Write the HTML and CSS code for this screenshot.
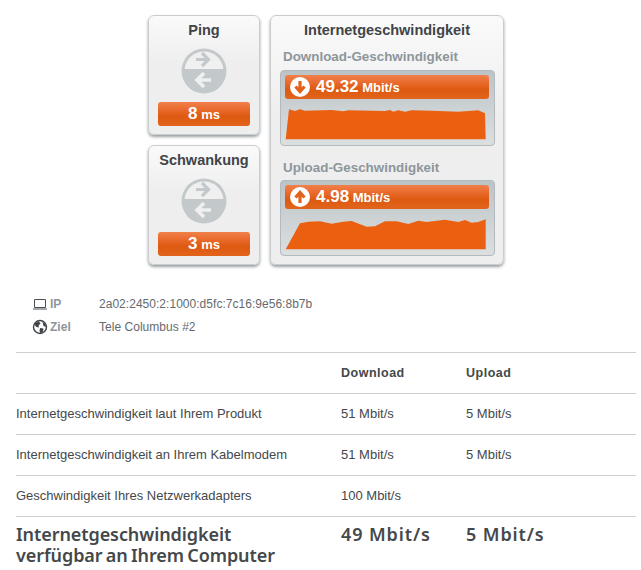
FILE: index.html
```html
<!DOCTYPE html>
<html>

	<head>
		<meta charset="UTF-8">
		<title>Speedtest</title>
		<link rel="stylesheet" href="styles.css">
	</head>

	<body>
		<div class="panels">
			<div class="side">
				<div class="box small">
					<h2>Ping</h2>
					<svg class="ping-icon" width="46" height="46" viewBox="0 0 46 46">
						<circle cx="23" cy="23" r="22.5" fill="#c3c8ca" />
						<path d="M3.6 21 A19.5 19.5 0 0 1 42.4 21 Z" fill="#f0f0f0" />
						<path d="M15 11.5 H28 M21 5 L27.5 11.5 L21 18" fill="none" stroke="#c3c8ca" stroke-width="3.2" />
						<path d="M30 32 H16 M23 25 L16 32 L23 39" fill="none" stroke="#f0f0f0" stroke-width="3.6" />
					</svg>
					<div class="bar value"><b>8</b> ms</div>
				</div>
				<div class="box small">
					<h2>Schwankung</h2>
					<svg class="ping-icon" width="46" height="46" viewBox="0 0 46 46">
						<circle cx="23" cy="23" r="22.5" fill="#c3c8ca" />
						<path d="M3.6 21 A19.5 19.5 0 0 1 42.4 21 Z" fill="#f0f0f0" />
						<path d="M15 11.5 H28 M21 5 L27.5 11.5 L21 18" fill="none" stroke="#c3c8ca" stroke-width="3.2" />
						<path d="M30 32 H16 M23 25 L16 32 L23 39" fill="none" stroke="#f0f0f0" stroke-width="3.6" />
					</svg>
					<div class="bar value"><b>3</b> ms</div>
				</div>
			</div>
			<div class="box big">
				<h2>Internetgeschwindigkeit</h2>
				<h3>Download-Geschwindigkeit</h3>
				<div class="graph">
					<div class="bar speed">
						<svg width="20" height="20" viewBox="0 0 20 20">
							<circle cx="10" cy="10" r="10" fill="#fff" />
							<path d="M10 4 V14 M5.5 9.5 L10 14.5 L14.5 9.5" fill="none" stroke="#e2621b" stroke-width="3.2" />
						</svg>
						<span><b>49.32</b> Mbit/s</span>
					</div>
					<svg class="chart" width="204" height="41" viewBox="0 0 204 41">
						<polygon fill="#eb5f10" points="0.7,40.3 4,10.3 10,12 15,10.3 20,11.7 46.7,11 58.3,12.3 63.3,11.3 100,12 105,11 108.3,12.7 113.3,11.3 120,12.7 126.7,11.3 146.7,11.7 173.3,12.7 193.3,11.3 200,14.3 200.7,40.3" />
					</svg>
				</div>
				<h3>Upload-Geschwindigkeit</h3>
				<div class="graph">
					<div class="bar speed">
						<svg width="20" height="20" viewBox="0 0 20 20">
							<circle cx="10" cy="10" r="10" fill="#fff" />
							<path d="M10 16 V6 M5.5 10.5 L10 5.5 L14.5 10.5" fill="none" stroke="#e2621b" stroke-width="3.2" />
						</svg>
						<span><b>4.98</b> Mbit/s</span>
					</div>
					<svg class="chart" width="204" height="41" viewBox="0 0 204 41">
						<polygon fill="#eb5f10" points="0.7,40.3 15,14.3 23.3,12.7 35,12.3 46.7,14.7 58.3,12.7 66.7,12 81.7,17.7 90,17.3 100,12.3 111.7,12.3 123.3,15 133.3,11.7 141.7,13 160,10.7 173.3,13 180,11 186.7,13.7 193.3,13 200.7,10.3 200.7,40.3" />
					</svg>
				</div>
			</div>
		</div>

		<div class="info">
			<div class="info-row">
				<span class="info-label">
					<svg width="16" height="14" viewBox="0 0 16 14">
						<path d="M2.5 2.5 H13.5 V10.5 H2.5 Z" fill="none" stroke="#4a4f53" stroke-width="1" />
						<path d="M1 11.5 H15 V12.5 H1 Z" fill="#4a4f53" />
					</svg>
					IP
				</span>
				<span>2a02:2450:2:1000:d5fc:7c16:9e56:8b7b</span>
			</div>
			<div class="info-row">
				<span class="info-label">
					<svg width="16" height="16" viewBox="0 0 16 16">
						<circle cx="8" cy="8" r="6.5" fill="#fff" stroke="#3f4448" stroke-width="1.4" />
						<path d="M3 4 L7 2.5 L8.5 4.5 L6.5 6.5 L7 8.5 L4.5 8 L2.5 6 Z M8 9 L11.5 9.5 L11 12.5 L8.5 14.5 L7.5 12 Z M10.5 3 L13.5 5 L14 8 L11.5 7 Z" fill="#3f4448" />
					</svg>
					Ziel
				</span>
				<span>Tele Columbus #2</span>
			</div>
		</div>

		<table class="results">
			<tr class="head">
				<td></td>
				<td>Download</td>
				<td>Upload</td>
			</tr>
			<tr>
				<td>Internetgeschwindigkeit laut Ihrem Produkt</td>
				<td>51 Mbit/s</td>
				<td>5 Mbit/s</td>
			</tr>
			<tr>
				<td>Internetgeschwindigkeit an Ihrem Kabelmodem</td>
				<td>51 Mbit/s</td>
				<td>5 Mbit/s</td>
			</tr>
			<tr>
				<td>Geschwindigkeit Ihres Netzwerkadapters</td>
				<td>100 Mbit/s</td>
				<td></td>
			</tr>
			<tr class="total">
				<td>Internetgeschwindigkeit<br>verfügbar an Ihrem Computer</td>
				<td class="num">49 Mbit/s</td>
				<td class="num">5 Mbit/s</td>
			</tr>
		</table>
	</body>

</html>
```

FILE: styles.css
```css
* {
	margin: 0;
	padding: 0;
	box-sizing: border-box;
}

body {
	width: 641px;
	height: 570px;
	overflow: hidden;
	background: #fff;
	font-family: "Liberation Sans", Arial, sans-serif;
	color: #3f4448;
}

.panels {
	display: flex;
	gap: 10px;
	padding: 15px 0 0 148px;
}

.side {
	display: flex;
	flex-direction: column;
	gap: 10px;
	width: 112px;
}

.box {
	border: 1px solid #c9cdcf;
	border-radius: 6px;
	background: linear-gradient(#fafafa, #eeeeee 40%, #eeeeee);
	box-shadow: 0 2px 3px rgba(70, 80, 85, 0.55);
}

.box h2 {
	font-size: 14.5px;
	line-height: 18px;
	font-weight: bold;
	text-align: center;
	color: #3f4448;
}

.small {
	height: 120px;
	padding-top: 5px;
	display: flex;
	flex-direction: column;
	align-items: center;
}

.ping-icon {
	display: block;
	margin-top: 9px;
}

.bar {
	border-radius: 3px;
	background: linear-gradient(#f0804a, #e8682a 35%, #dd5a10 60%, #e2641c);
	color: #fff;
	font-weight: bold;
}

.value {
	width: 92px;
	height: 24px;
	margin-top: 8px;
	font-size: 13px;
	line-height: 24px;
	text-align: center;
}

.value b {
	font-size: 17px;
}

.big {
	width: 234px;
	height: 250px;
	padding: 5px 9px 0;
}

.big h3 {
	padding-left: 3px;
	font-size: 13.4px;
	line-height: 18px;
	font-weight: bold;
	color: #8d969b;
}

.big h2 + h3 {
	margin-top: 9px;
}

.graph + h3 {
	margin-top: 13px;
}

.graph {
	width: 215px;
	height: 76px;
	margin-top: 4px;
	padding: 4px 5px 4px 4px;
	border: 1px solid #b3b9bc;
	border-radius: 4px;
	background: linear-gradient(#bcc3c7, #dcdfe0);
}

.graph + h3 + .graph {
	margin-top: 3px;
}

.speed {
	display: flex;
	align-items: center;
	gap: 6px;
	height: 24px;
	padding-left: 5px;
	font-size: 13px;
}

.speed b {
	font-size: 17px;
}

.chart {
	display: block;
}

.info {
	padding: 27px 0 0 32px;
	font-size: 12px;
	letter-spacing: 0.03px;
	color: #666a6d;
}

.info-row {
	display: flex;
	align-items: center;
	height: 23px;
}

.info-label {
	display: flex;
	align-items: center;
	gap: 2px;
	width: 67px;
	font-weight: bold;
	color: #8d969b;
}

.results {
	width: 620px;
	margin: 14px 0 0 16px;
	border-collapse: collapse;
	table-layout: fixed;
	font-size: 13px;
	color: #44484b;
}

.results td {
	height: 41px;
	padding-bottom: 2px;
	border-top: 1px solid #cfcfcf;
	vertical-align: middle;
}

.results .head td {
	padding-bottom: 0;
	font-size: 12.5px;
	letter-spacing: 0.5px;
	font-weight: bold;
}

.results .total td {
	height: 52px;
	vertical-align: top;
	padding: 7px 0 0;
	font-family: "Noto Sans", sans-serif;
	font-size: 18px;
	line-height: 21px;
	letter-spacing: -0.08px;
	word-spacing: -1.3px;
	font-weight: 600;
}

.results .total .num {
	letter-spacing: 0.9px;
	word-spacing: 0;
}

.results td:nth-child(1) {
	width: 325px;
}

.results td:nth-child(2) {
	width: 125px;
}
```
